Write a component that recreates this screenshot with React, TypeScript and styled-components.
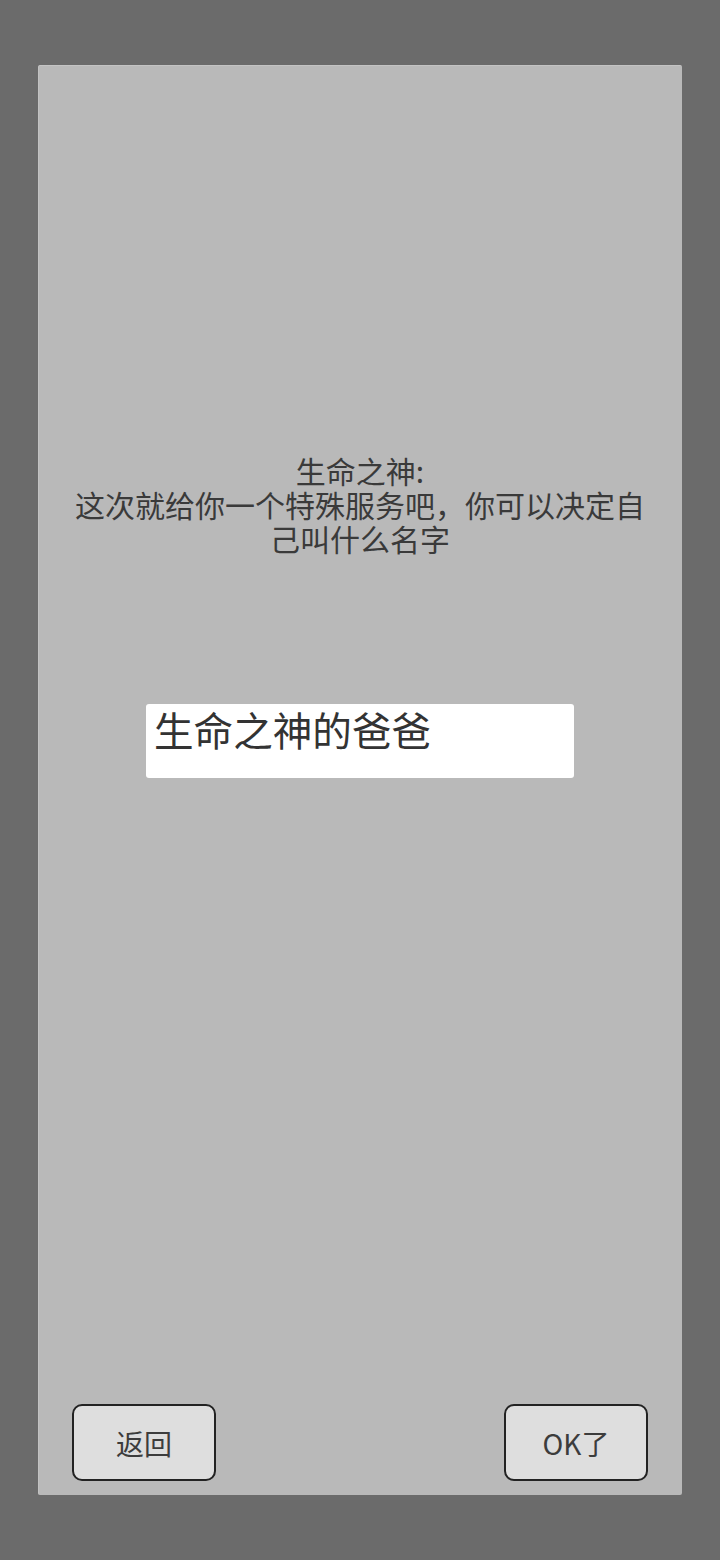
import React, { useState } from "react";
import styled, { createGlobalStyle } from "styled-components";

const GlobalStyle = createGlobalStyle`
  html, body {
    margin: 0;
    padding: 0;
    background: #6b6b6b;
  }
  body {
    font-family: "Noto Sans CJK SC", "Noto Sans", sans-serif;
  }
`;

const App: React.FC = () => {
  const [name, setName] = useState("生命之神的爸爸");

  return (
    <>
      <GlobalStyle />
      <Screen>
        <Panel>
          <Prompt>
            <PromptLine>生命之神:</PromptLine>
            <PromptLine>这次就给你一个特殊服务吧，你可以决定自己叫什么名字</PromptLine>
          </Prompt>
          <NameInput
            value={name}
            onChange={(e: React.ChangeEvent<HTMLInputElement>) => setName(e.target.value)}
          />
          <Spacer />
          <ButtonRow>
            <DialogButton>返回</DialogButton>
            <DialogButton>OK了</DialogButton>
          </ButtonRow>
        </Panel>
      </Screen>
    </>
  );
};

export default App;

const Screen = styled.div`
  width: 720px;
  height: 1560px;
  box-sizing: border-box;
  padding: 65px 38px;
  background: #6b6b6b;
`;

const Panel = styled.div`
  height: 100%;
  box-sizing: border-box;
  background: #b9b9b9;
  border-top: 1px solid #c4c4c4;
  border-left: 1px solid #c2c2c2;
  border-radius: 2px;
  display: flex;
  flex-direction: column;
  align-items: center;
  padding: 0 34px 14px 33px;
`;

const Prompt = styled.div`
  margin-top: 387px;
  width: 592px;
  font-size: 30px;
  color: #3a3a3a;
  text-align: center;
`;

const PromptLine = styled.div`
  line-height: 34px;
`;

const NameInput = styled.input`
  margin-top: 149px;
  width: 428px;
  height: 74px;
  box-sizing: border-box;
  border: none;
  border-radius: 3px;
  background: #ffffff;
  padding: 0 8px 26px 8px;
  font-family: "Noto Sans CJK SC", "Noto Sans", sans-serif;
  font-size: 39.6px;
  color: #333333;
  outline: none;
`;

const Spacer = styled.div`
  flex: 1;
`;

const ButtonRow = styled.div`
  width: 100%;
  display: flex;
  justify-content: space-between;
`;

const DialogButton = styled.button`
  width: 144px;
  height: 77px;
  box-sizing: border-box;
  background: #dedede;
  border: 2px solid #222222;
  border-radius: 10px;
  font-family: "Noto Sans CJK SC", "Noto Sans", sans-serif;
  font-size: 28px;
  color: #3c3c3c;
  padding: 0;
  cursor: pointer;
`;
